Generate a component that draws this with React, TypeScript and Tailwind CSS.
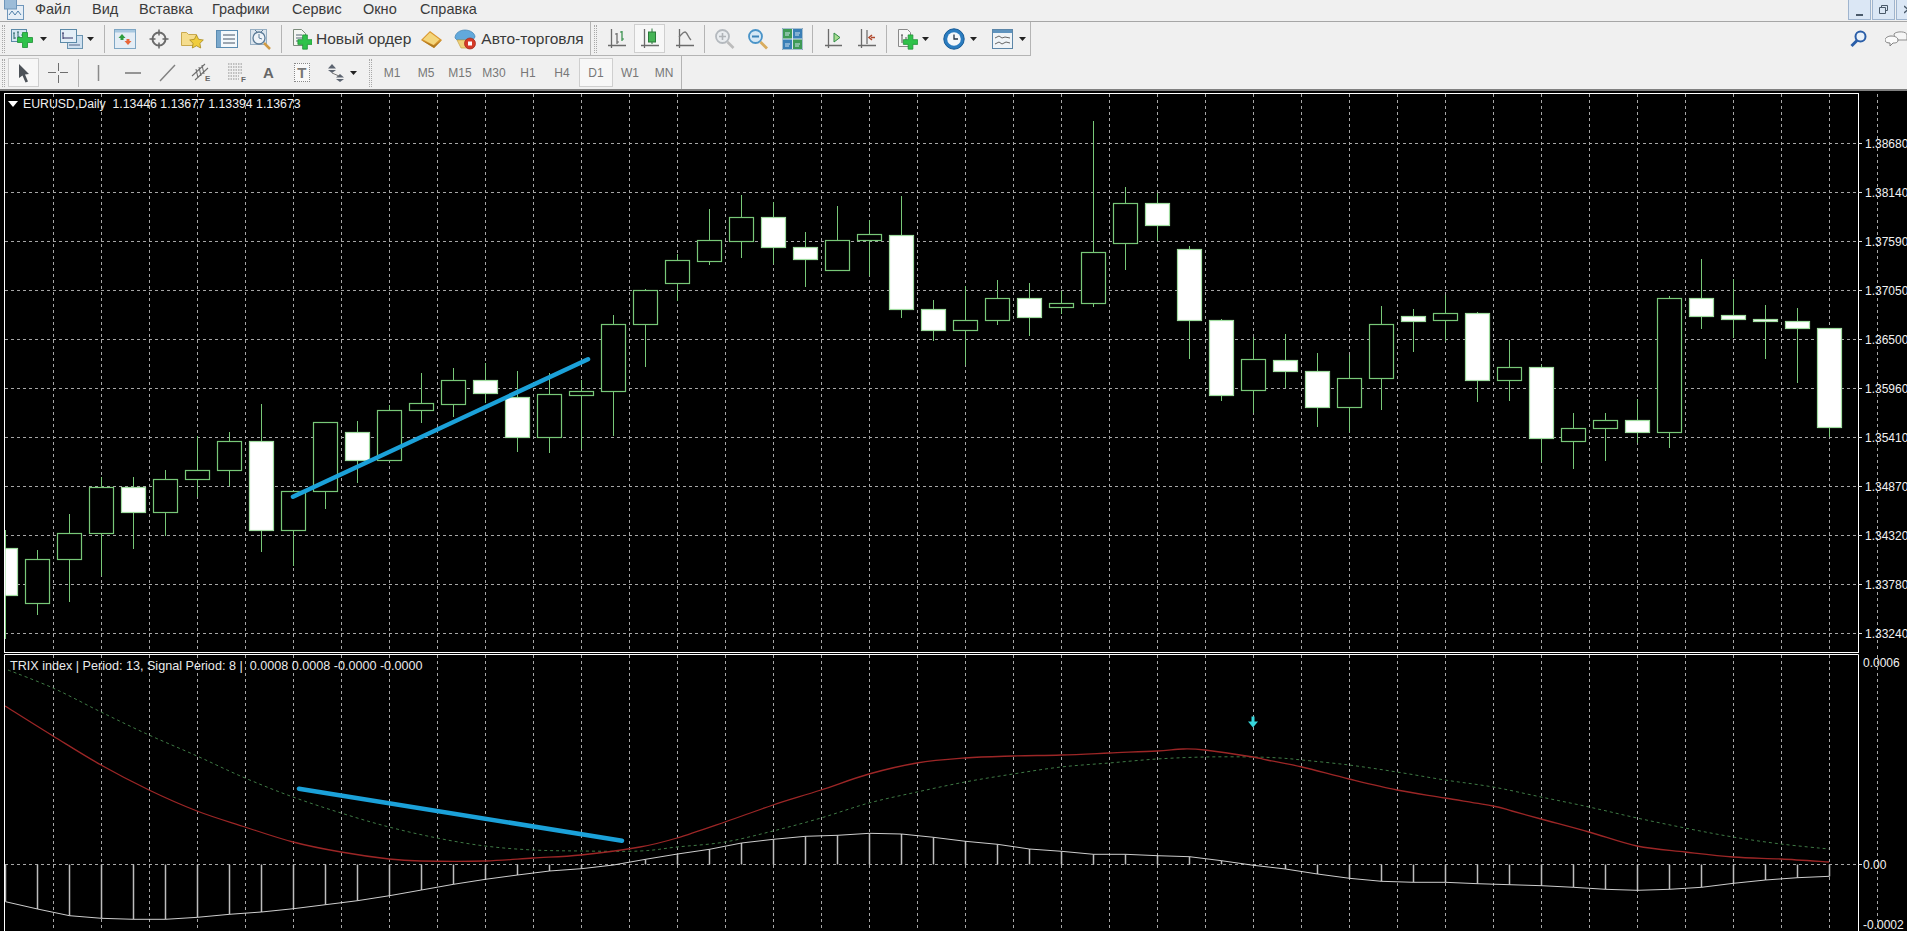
import React from "react";

type IconProps = { className?: string };
const W: React.FC<{ w: number; h?: number; className?: string; children: React.ReactNode; vb?: string }> = ({ w, h = 22, className, children, vb }) => (
  <svg width={w} height={h} viewBox={vb ?? `0 0 ${w} ${h}`} className={"shrink-0 " + (className ?? "")}>{children}</svg>
);

const GreenPlus = ({ x, y, s = 1 }: { x: number; y: number; s?: number }) => (
  <path transform={`translate(${x} ${y}) scale(${s})`} d="M-2.5 -7.5h5v5h5v5h-5v5h-5v-5h-5v-5h5z" fill="#2fc24a" stroke="#1d8f34" strokeWidth="0.8" />
);
const Axes = ({ c = "#6b6b6b" }: { c?: string }) => (
  <g stroke={c} strokeWidth="1.3" fill="none">
    <path d="M0 17.5h18M3.5 1v19" />
  </g>
);

const IconNewChart = ({ className }: IconProps) => (
  <W w={22} className={className}>
    <rect x="0.5" y="1.5" width="15" height="12" fill="#d6e6f3" stroke="#5c8aa8" />
    <path d="M3 5v6M2 5h2M3 10h2M7 4v6M6 4h2M7 9h2" stroke="#2f6a6a" fill="none" strokeWidth="1" />
    <path d="M10 7l4 0" stroke="#3a7" />
    <GreenPlus x={14} y={12} s={1} />
  </W>
);
const IconProfiles = ({ className }: IconProps) => (
  <W w={23} className={className}>
    <rect x="7.5" y="7.5" width="15" height="13" fill="#cfe0ef" stroke="#6a93b0" />
    <rect x="0.5" y="1.5" width="16" height="13" fill="#e3eef7" stroke="#5c8aa8" />
    <path d="M3 5v6M2 5h2M3 10h10" stroke="#336" fill="none" />
    <path d="M9 17h11" stroke="#568" fill="none" />
  </W>
);
const IconMarket = ({ className }: IconProps) => (
  <W w={22} className={className}>
    <rect x="0.5" y="1.5" width="21" height="19" fill="#e4edf5" stroke="#7ea6c4" />
    <rect x="1" y="2" width="20" height="2.5" fill="#a8c8e0" />
    <path d="M8 6l-3.500 4h2v2h3v-2h2z" fill="#2e9e3e" />
    <path d="M14 17l3.500 -4h-2v-2h-3v2h-2z" fill="#e8663a" />
  </W>
);
const IconTarget = ({ className }: IconProps) => (
  <W w={20} className={className}>
    <circle cx="10" cy="11" r="6.500" fill="none" stroke="#6b6b6b" strokeWidth="2" />
    <path d="M10 1.500v6M10 14.500v6M0.500 11h6M13.500 11h6" stroke="#666" strokeWidth="1.500" />
  </W>
);
const IconFolderStar = ({ className }: IconProps) => (
  <W w={23} className={className}>
    <path d="M0.500 4.500v13h15v-11h-8l-2-2z" fill="#f5dd8e" stroke="#c9a94e" />
    <path d="M15.500 7l2.100 4.300 4.700 .7-3.400 3.300.8 4.700-4.200-2.200-4.200 2.200.8-4.700-3.400-3.300 4.700-.7z" fill="#f0cd3c" stroke="#a88a1e" strokeWidth="0.8" />
  </W>
);
const IconTerminal = ({ className }: IconProps) => (
  <W w={22} className={className}>
    <rect x="0.500" y="2.500" width="21" height="17" fill="#f4f8fb" stroke="#5b8bb0" />
    <rect x="1" y="3" width="4" height="16" fill="#7aa8cc" />
    <path d="M7 7h12M7 11h12M7 15h12" stroke="#456" />
  </W>
);
const IconTester = ({ className }: IconProps) => (
  <W w={22} className={className}>
    <rect x="0.500" y="1.500" width="16" height="15" fill="#dbe5ee" stroke="#96aec2" />
    <circle cx="9" cy="10" r="6" fill="#eef3f8" stroke="#5c7c98" strokeWidth="1.300" />
    <path d="M9 6v4l3 1M5 2l2 2M13 2l-2 2" stroke="#5c7c98" fill="none" />
    <path d="M14 15l6 6" stroke="#d09a44" strokeWidth="2.500" />
  </W>
);
const IconNewOrder = ({ className }: IconProps) => (
  <W w={20} className={className}>
    <path d="M1.500 1.500h8l4 4v12h-12z" fill="#f4f6f2" stroke="#7b8b7b" />
    <path d="M4 7h6M4 10h7M4 13h4" stroke="#567" />
    <GreenPlus x={13} y={14} s={0.95} />
  </W>
);
const IconGold = ({ className }: IconProps) => (
  <W w={23} className={className}>
    <path d="M1 12l9-9 12 9-8 8z" fill="#d9972f" />
    <path d="M3 11.500l7-7 9.500 7-6 5.500z" fill="#f4d67c" />
    <path d="M1 12l13 8 8-8-8 5.500z" fill="#b07a20" />
  </W>
);
const IconAuto = ({ className }: IconProps) => (
  <W w={22} className={className}>
    <path d="M1 10c0-5 5-8 10-8s10 3 10 7l-2 3H3z" fill="#62a9dc" stroke="#3d7fb0" strokeWidth="0.700" />
    <path d="M3 12h16l-3 8H7z" fill="#efd27a" stroke="#c5a246" strokeWidth="0.700" />
    <circle cx="16" cy="15.500" r="5.500" fill="#d43a28" stroke="#a02818" strokeWidth="0.700" />
    <rect x="14" y="13.500" width="4" height="4" fill="#fff" />
  </W>
);
const IconBars = ({ className }: IconProps) => (
  <W w={18} className={className}>
    <Axes />
    <path d="M9 5v11M9 6H7M9 14h2" stroke="#666" fill="none" strokeWidth="1.200" />
    <path d="M14 3v10M14 4h-2M14 11h2" stroke="#2e8b44" fill="none" strokeWidth="1.200" />
  </W>
);
const IconCandles = ({ className }: IconProps) => (
  <W w={18} className={className}>
    <Axes />
    <rect x="7.500" y="4" width="7" height="10" fill="#46b456" stroke="#2a7a3a" />
    <path d="M11 0.500v3.500M11 14v2" stroke="#2a7a3a" />
  </W>
);
const IconLineChart = ({ className }: IconProps) => (
  <W w={18} className={className}>
    <Axes />
    <path d="M3 9c3-3 4-5 6-5 2 0 3 5 6 8" fill="none" stroke="#777" strokeWidth="1.300" />
  </W>
);
const IconZoomIn = ({ className }: IconProps) => (
  <W w={21} className={className}>
    <circle cx="8.500" cy="8.500" r="6.500" fill="#e9ecef" stroke="#b4b9be" strokeWidth="1.800" />
    <path d="M5 8.500h7M8.500 5v7" stroke="#b0b4b8" strokeWidth="1.600" />
    <path d="M13.500 14l6 6" stroke="#bcbcbc" strokeWidth="2.600" />
  </W>
);
const IconZoomOut = ({ className }: IconProps) => (
  <W w={22} className={className}>
    <circle cx="8.500" cy="8.500" r="6.500" fill="#d6e8f5" stroke="#4a94c8" strokeWidth="1.800" />
    <path d="M5 8.500h7" stroke="#3d84b8" strokeWidth="2" />
    <path d="M13.500 14l6.500 6.500" stroke="#d8ac5e" strokeWidth="2.800" />
  </W>
);
const IconTile = ({ className }: IconProps) => (
  <W w={21} className={className}>
    <rect x="0" y="0" width="21" height="22" fill="#dfe9f2" stroke="#6f94ae" />
    <rect x="1" y="1" width="9" height="9.500" fill="#3e9a56" /><rect x="11" y="1" width="9" height="9.500" fill="#3a7fb6" />
    <rect x="1" y="11.500" width="9" height="9.500" fill="#3a7fb6" /><rect x="11" y="11.500" width="9" height="9.500" fill="#3e9a56" />
    <path d="M3 5h5M3 7h4M13 5h5M13 7h4M3 16h5M3 18h4M13 16h5M13 18h4" stroke="#cfe2ee" strokeWidth="1" />
  </W>
);
const IconAutoScroll = ({ className }: IconProps) => (
  <W w={17} className={className}>
    <Axes />
    <path d="M9 5l6 4.500-6 4.500z" fill="#a8dc90" stroke="#2e8b44" />
  </W>
);
const IconShift = ({ className }: IconProps) => (
  <W w={19} className={className}>
    <Axes />
    <path d="M9 2v14" stroke="#666" strokeWidth="1.200" />
    <path d="M17 9.500h-4M14 7l-3 2.500 3 2.500" fill="none" stroke="#b0492e" strokeWidth="1.500" />
  </W>
);
const IconIndicators = ({ className }: IconProps) => (
  <W w={21} className={className}>
    <path d="M1.500 1.500h9l3 3v14h-12z" fill="#f6f6f6" stroke="#8a8a8a" />
    <path d="M5 7v8M4 7h2M9 9v6" stroke="#555" />
    <GreenPlus x={13.500} y={14} s={0.95} />
  </W>
);
const IconClock = ({ className }: IconProps) => (
  <W w={22} className={className}>
    <circle cx="11" cy="11" r="10.200" fill="#2a7cc0" stroke="#155a96" />
    <circle cx="11" cy="11" r="6.800" fill="#f4f7fa" />
    <path d="M11 6.500v4.500h4" fill="none" stroke="#234" strokeWidth="1.300" />
  </W>
);
const IconTemplates = ({ className }: IconProps) => (
  <W w={21} className={className}>
    <rect x="0.500" y="1.500" width="20" height="19" fill="#f0f4f7" stroke="#5c86a8" />
    <rect x="1" y="2" width="19" height="3" fill="#5e93be" />
    <path d="M3 10l4-2 3 2 3-1 5 1M3 16l4-2 3 2 4-2 4 1" fill="none" stroke="#666" />
  </W>
);
const IconCursor = ({ className }: IconProps) => (
  <W w={12} h={20} className={className}>
    <path d="M1 1l10 10-4 .5 3 7-2.500 1-3-7L1 15z" fill="#4d5258" />
  </W>
);
const IconCross = ({ className }: IconProps) => (
  <W w={20} className={className}>
    <path d="M0 10.500h8M12 10.500h8M10.500 1v8M10.500 13v8" stroke="#6e6e6e" />
  </W>
);
const IconVLine = ({ className }: IconProps) => (
  <W w={3} className={className}><path d="M1.500 3v16" stroke="#8a8a8a" strokeWidth="1.500" /></W>
);
const IconHLine = ({ className }: IconProps) => (
  <W w={16} className={className}><path d="M0 11h16" stroke="#777" strokeWidth="1.500" /></W>
);
const IconTrend = ({ className }: IconProps) => (
  <W w={17} className={className}><path d="M1 19L16 3" stroke="#808080" strokeWidth="1.400" /></W>
);
const IconChannels = ({ className }: IconProps) => (
  <W w={21} h={24} className={className}>
    <path d="M1 15L14 3M4 19L17 7M5 8l2 9M8 6l2 9M11 4l2 9" stroke="#6e6e6e" strokeWidth="1.100" />
    <text x="14" y="20" fontSize="8" fontWeight="700" fontFamily="Liberation Sans, sans-serif" fill="#666">E</text>
  </W>
);
const IconFibo = ({ className }: IconProps) => (
  <W w={19} h={24} className={className}>
    <path d="M0 3h14M0 6h14M0 9h14M0 12h14M0 15h11M0 18h11" stroke="#8e8e8e" strokeDasharray="1.500 1" />
    <text x="13" y="21" fontSize="8" fontWeight="700" fontFamily="Liberation Sans, sans-serif" fill="#666">F</text>
  </W>
);
const IconSwap = ({ className }: IconProps) => (
  <W w={18} className={className}>
    <path d="M5 2l4 4.500H1z" fill="#5c6470" /><path d="M1 8l4 3 4-3z" fill="#5c6470" />
    <path d="M13 12l4 3.500h-8z" fill="#5c6470" /><path d="M9 17l4 3 4-3z" fill="#5c6470" />
    <path d="M5 11l7 3" stroke="#777" />
  </W>
);
const Drop = ({ className }: IconProps) => (
  <W w={7} h={4} className={className}><path d="M0 0h7L3.500 4z" fill="#222" /></W>
);
const Grip = ({ className }: IconProps) => (
  <div className={"w-[3px] h-[28px] shrink-0 border-x border-dotted border-[#a8a8a8] " + (className ?? "")} />
);
const Sep = ({ className }: IconProps) => <div className={"w-px h-[28px] shrink-0 bg-[#b4b4b4] " + (className ?? "")} />;

const menu = [
  ["Файл", "w-[57px]"],
  ["Вид", "w-[47px]"],
  ["Вставка", "w-[73px]"],
  ["Графики", "w-[80px]"],
  ["Сервис", "w-[71px]"],
  ["Окно", "w-[57px]"],
  ["Справка", "w-[70px]"],
];
const frames = ["M1", "M5", "M15", "M30", "H1", "H4", "D1", "W1", "MN"];

// wickTop, bodyTop, bodyBottom, wickBottom, white
const candles: [number, number, number, number, number][] = [
  [530, 548, 595, 639, 1], [550, 559, 603, 615, 0], [514, 533, 559, 602, 0], [477, 487, 533, 576, 0], [477, 487, 512, 549, 1],
  [470, 479, 512, 536, 0], [436, 470, 479, 497, 0], [432, 441, 470, 486, 0], [404, 441, 530, 552, 1], [491, 491, 530, 566, 0],
  [422, 422, 491, 509, 0], [421, 432, 460, 483, 1], [405, 410, 460, 460, 0], [373, 403, 410, 423, 0], [368, 380, 404, 417, 0],
  [363, 380, 393, 403, 1], [371, 397, 437, 452, 1], [373, 394, 437, 453, 0], [380, 391, 395, 449, 0], [315, 324, 391, 436, 0],
  [289, 290, 324, 367, 0], [254, 260, 283, 301, 0], [209, 240, 261, 265, 0], [195, 217, 241, 258, 0], [202, 217, 247, 264, 1],
  [232, 247, 259, 287, 1], [206, 240, 270, 270, 0], [220, 234, 240, 276, 0], [196, 235, 309, 318, 1], [300, 309, 330, 341, 1],
  [286, 320, 330, 365, 0], [280, 298, 320, 325, 0], [283, 298, 317, 336, 1], [291, 303, 307, 314, 0], [121, 252, 303, 307, 0],
  [187, 203, 243, 270, 0], [193, 203, 225, 241, 1], [246, 249, 320, 359, 1], [319, 320, 395, 401, 1], [337, 359, 390, 413, 0],
  [334, 360, 371, 388, 1], [353, 371, 407, 427, 1], [355, 378, 407, 432, 0], [306, 324, 378, 410, 0], [309, 316, 321, 352, 1],
  [295, 313, 320, 341, 0], [312, 313, 380, 402, 1], [340, 367, 380, 401, 0], [365, 367, 438, 462, 1], [413, 428, 441, 469, 0],
  [413, 420, 428, 461, 0], [399, 420, 432, 443, 1], [296, 298, 432, 448, 0], [259, 298, 316, 329, 1], [279, 315, 319, 338, 1],
  [305, 319, 321, 359, 1], [308, 321, 328, 383, 1], [328, 328, 427, 437, 1],
];
const cx = (i: number) => Math.round(5.3 + 32 * i) + 0.5;

const hist = [755, 777, 797, 805, 808, 808, 802, 793, 786, 776, 764, 752, 737, 720, 703, 688, 675, 663, 656, 645, 628, 612, 598, 579, 568, 559, 556, 550, 552, 562, 574, 583, 597, 604, 613, 613, 617, 620, 632, 646, 657, 672, 685, 694, 697, 697, 701, 704, 707, 712, 718, 721, 718, 712, 700, 690, 683, 679].map((z) => 650 + z / 3);

const red = "5,706 53,736 101,765 149,790 197,811 245,827 293,842 341,852 389,859 420,861 485,861 533,858 581,855 640,847 677,838 725,822 773,805 821,790 869,774 917,763 965,758 1013,756 1061,755 1109,753 1157,751 1183,749 1205,750 1253,757 1267,760 1302,767 1349,779 1397,790 1445,798 1493,806 1512,811 1541,819 1589,832 1637,846 1685,852 1733,857 1781,859 1829,862";
const green = "8,670 53,688 101,712 149,735 197,756 245,778 293,797 341,813 389,827 437,838 485,846 533,850 581,851 640,851 677,847 725,842 773,831 821,818 869,803 917,792 965,782 1013,774 1061,767 1109,763 1157,759 1205,757 1253,757 1280,758 1302,760 1349,765 1397,772 1445,780 1493,787 1541,797 1589,807 1637,818 1685,828 1733,837 1781,844 1829,849";

// Catmull-Rom smoothing so that the indicator curves are not visibly kinked
const smooth = (s: string) => {
  const p = s.split(" ").map((q) => q.split(",").map(Number));
  let d = `M${p[0][0]} ${p[0][1]}`;
  for (let i = 0; i < p.length - 1; i++) {
    const a = p[Math.max(0, i - 1)], b = p[i], c = p[i + 1], e = p[Math.min(p.length - 1, i + 2)];
    d += `C${(b[0] + (c[0] - a[0]) / 6).toFixed(1)} ${(b[1] + (c[1] - a[1]) / 6).toFixed(1)} ${(c[0] - (e[0] - b[0]) / 6).toFixed(1)} ${(c[1] - (e[1] - b[1]) / 6).toFixed(1)} ${c[0]} ${c[1]}`;
  }
  return d;
};

const vLines = Array.from({ length: 39 }, (_, k) => 53.5 + 48 * k);
const prices = ["1.38680", "1.38140", "1.37590", "1.37050", "1.36500", "1.35960", "1.35410", "1.34870", "1.34320", "1.33780", "1.33240"];
const GRID = "#a6a6a6";
const DASH = "3 3";
const LABEL = { fontFamily: "Liberation Sans, sans-serif", fontSize: 12, fill: "#f2f2f2" };

function MainPanel() {
  return (
    <div className="relative h-[562px]">
      <svg width="1907" height="562" viewBox="0 91 1907 562" className="block">
        <g stroke={GRID} strokeDasharray={DASH}>
          {vLines.map((x) => <line key={x} x1={x} x2={x} y1={94} y2={652} />)}
          {prices.map((_, k) => <line key={k} x1={5} x2={1858} y1={143.5 + 49 * k} y2={143.5 + 49 * k} />)}
        </g>
        {candles.map(([wt, bt, bb, wb, white], i) => {
          const c = cx(i);
          const left = Math.max(5, c - 12);
          return (
            <g key={i}>
              <line x1={c} x2={c} y1={wt} y2={wb} stroke="#78c878" />
              <rect x={left} y={bt + 0.5} width={c + 12 - left} height={bb - bt} fill={white ? "#ffffff" : "#000000"} stroke={white ? "#a0dca0" : "#78c878"} strokeWidth="1.200" />
            </g>
          );
        })}
        <line x1="293" y1="496.700" x2="588" y2="359.300" stroke="#1ba1d9" strokeWidth="4.500" strokeLinecap="round" />
        <rect x="4.500" y="93.500" width="1854" height="559" fill="none" stroke="#ffffff" />
        {prices.map((p, k) => (
          <g key={p}>
            <line x1="1858" x2="1862" y1={143.5 + 49 * k} y2={143.5 + 49 * k} stroke="#e0e0e0" />
            <text x="1865" y={148 + 49 * k} {...LABEL}>{p}</text>
          </g>
        ))}
      </svg>
      <div className="absolute left-[8px] top-[6px] flex items-center gap-[5px] text-[12.300px] leading-[14px] text-[#f0f0f0] font-['Liberation_Sans',sans-serif] whitespace-pre">
        <svg width="10" height="6" viewBox="0 0 10 6"><path d="M0 0h10L5 6z" fill="#fff" /></svg>
        <span>EURUSD,Daily  1.13446 1.13677 1.13394 1.13673</span>
      </div>
    </div>
  );
}

function SubPanel() {
  return (
    <div className="relative h-[278px]">
      <svg width="1907" height="278" viewBox="0 653 1907 278" className="block">
        <g stroke={GRID} strokeDasharray={DASH}>
          {vLines.map((x) => <line key={x} x1={x} x2={x} y1={655} y2={931} />)}
          <line x1={5} x2={1858} y1={864.5} y2={864.5} />
        </g>
        <path d={smooth(green)} fill="none" stroke="#3f7a45" strokeWidth="1" strokeDasharray="3 3" />
        <path d={smooth(red)} fill="none" stroke="#9c2626" strokeWidth="1.300" />
        {hist.map((y, i) => <line key={i} x1={cx(i)} x2={cx(i)} y1={864.5} y2={y} stroke="#bdbdbd" strokeWidth="1.500" />)}
        <polyline points={hist.map((y, i) => `${cx(i)},${y.toFixed(1)}`).join(" ")} fill="none" stroke="#e4e4e4" strokeWidth="0.900" />
        <line x1="299" y1="788.700" x2="622" y2="840.700" stroke="#1ba1d9" strokeWidth="4.500" strokeLinecap="round" />
        <path d="M1251.500 716.500h3v5h3.500l-5 6-5-6h3.500z" fill="#37d6dc" />
        <path d="M4.500 931V654.500H1858.500V931" fill="none" stroke="#ffffff" />
        <line x1="1858" x2="1862" y1="864.500" y2="864.500" stroke="#e0e0e0" />
        <text x="1863" y="667" {...LABEL}>0.0006</text>
        <text x="1863" y="869" {...LABEL}>0.00</text>
        <text x="1863" y="929" {...LABEL}>-0.0002</text>
      </svg>
      <div className="absolute left-[10px] top-[6px] text-[12.600px] leading-[14px] text-[#eaeaea] font-['Liberation_Sans',sans-serif] whitespace-pre">
        TRIX index | Period: 13, Signal Period: 8 |  0.0008 0.0008 -0.0000 -0.0000
      </div>
    </div>
  );
}

export default function App() {
  return (
    <div className="w-[1907px] h-[931px] overflow-hidden bg-[#f0f0f0] flex flex-col font-['Liberation_Sans',sans-serif] text-[#333]">
      {/* menu */}
      <div className="h-[22px] shrink-0 flex items-start border-b border-[#a6a6a6]">
        <svg width="20" height="20" viewBox="0 0 20 20" className="ml-[4px] shrink-0">
          <rect x="3.500" y="5.500" width="16" height="14" fill="#e6eef6" stroke="#6f96ba" />
          <rect x="0.500" y="-2" width="12" height="11" fill="#9cbcd8" stroke="#6f96ba" />
          <path d="M5 15l3-4 3 4 3-4 3 4" fill="none" stroke="#4d7ea8" />
        </svg>
        <div className="flex ml-[11px] text-[14.500px] leading-[19px] text-[#3a3a3a]">
          {menu.map(([t, w]) => <div key={t} className={w}>{t}</div>)}
        </div>
        <div className="ml-auto flex gap-px">
          <div className="w-[23px] h-[20px] bg-[#dbe7f5] border border-t-0 border-[#9fb4ce] flex items-end justify-center pb-[3px]"><div className="w-[7px] h-[2px] bg-[#4a5a6a]" /></div>
          <div className="w-[23px] h-[20px] bg-[#dbe7f5] border border-t-0 border-[#9fb4ce] flex items-center justify-center">
            <svg width="9" height="9" viewBox="0 0 9 9"><path d="M2.500 2.500v-2h6v5h-2M.5 2.500h6v6h-6z" fill="none" stroke="#4a5a6a" /></svg>
          </div>
          <div className="w-[11px] h-[20px] bg-[#dbe7f5] border-l border-b border-[#9fb4ce] flex items-center overflow-hidden pl-[7px]">
            <svg width="4" height="9" viewBox="0 0 4 9" className="shrink-0"><path d="M0 1l4 3.500M0 8l4-3.500" stroke="#4a5a6a" strokeWidth="1.500" /></svg>
          </div>
        </div>
      </div>

      {/* toolbar row 1 */}
      <div className="h-[34px] shrink-0 flex">
        <div className="w-[591px] h-[34px] flex items-center border-r border-b border-[#b4b4b4] pl-[2px]">
          <Grip />
          <IconNewChart className="ml-[6px]" />
          <Drop className="ml-[7px]" />
          <IconProfiles className="ml-[13px]" />
          <Drop className="ml-[4px]" />
          <Sep className="ml-[10px]" />
          <IconMarket className="ml-[9px]" />
          <IconTarget className="ml-[13px]" />
          <IconFolderStar className="ml-[12px]" />
          <IconTerminal className="ml-[12px]" />
          <IconTester className="ml-[12px]" />
          <Sep className="ml-[9px]" />
          <IconNewOrder className="ml-[10px]" />
          <span className="ml-[4px] text-[15.500px] leading-[20px] whitespace-nowrap text-[#3a3a3a]">Новый ордер</span>
          <IconGold className="ml-[9px]" />
          <IconAuto className="ml-[11px]" />
          <span className="ml-[5px] text-[15.500px] leading-[20px] whitespace-nowrap text-[#3a3a3a]">Авто-торговля</span>
        </div>
        <div className="w-[440px] h-[34px] flex items-center border-r border-b border-[#b4b4b4] pl-[3px]">
          <Grip />
          <IconBars className="ml-[11px]" />
          <div className="ml-[8px] w-[31px] h-[29px] flex items-center justify-center bg-[#f7f7f7] border border-[#cfcfcf] shrink-0"><IconCandles /></div>
          <IconLineChart className="ml-[11px]" />
          <Sep className="ml-[10px]" />
          <IconZoomIn className="ml-[9px]" />
          <IconZoomOut className="ml-[12px]" />
          <IconTile className="ml-[13px]" />
          <Sep className="ml-[9px]" />
          <IconAutoScroll className="ml-[12px]" />
          <IconShift className="ml-[16px]" />
          <Sep className="ml-[9px]" />
          <IconIndicators className="ml-[10px]" />
          <Drop className="ml-[4px]" />
          <IconClock className="ml-[14px]" />
          <Drop className="ml-[5px]" />
          <IconTemplates className="ml-[15px]" />
          <Drop className="ml-[6px]" />
        </div>
        <div className="flex-1 flex items-center justify-end">
          <svg width="17" height="18" viewBox="0 0 17 18" className="mr-[18px]">
            <circle cx="10.500" cy="6.500" r="5" fill="#eaf2fa" stroke="#2a5ea8" strokeWidth="2" />
            <path d="M7 10.500L1.500 16" stroke="#2a5ea8" strokeWidth="3" />
          </svg>
          <svg width="22" height="18" viewBox="0 0 22 18">
            <path d="M9 4c2-3 13-3 13 1v5H10z" fill="#f6f6f6" stroke="#8e8e8e" />
            <path d="M6 6c3 0 7 1 7 4s-3 3-5 3l-3 3v-3c-3 0-5-1-5-3s3-4 6-4z" fill="#fafafa" stroke="#808080" />
          </svg>
        </div>
      </div>

      {/* toolbar row 2 */}
      <div className="h-[33px] shrink-0 flex">
        <div className="w-[682px] h-[33px] flex items-center border-r border-[#b4b4b4] pl-[2px]">
          <Grip />
          <div className="ml-[3px] w-[31px] h-[29px] flex items-center justify-center bg-[#f7f7f7] border border-[#cfcfcf] shrink-0"><IconCursor /></div>
          <IconCross className="ml-[9px]" />
          <Sep className="ml-[10px]" />
          <IconVLine className="ml-[18px]" />
          <IconHLine className="ml-[25px]" />
          <IconTrend className="ml-[18px]" />
          <IconChannels className="ml-[15px]" />
          <IconFibo className="ml-[16px]" />
          <span className="ml-[16px] w-[11px] text-[15px] font-bold text-[#666] leading-[20px]">A</span>
          <div className="ml-[20px] w-[17px] h-[19px] border border-dotted border-[#888] flex items-center justify-center text-[15px] font-bold text-[#777] leading-none bg-[#f8f8f8]">T</div>
          <IconSwap className="ml-[17px]" />
          <Drop className="ml-[5px]" />
          <Grip className="ml-[12px]" />
          <div className="ml-[3px] flex items-center text-[12px] text-[#777]">
            {frames.map((f) => (
              <div key={f} className={f === "D1" ? "w-[34px] h-[29px] pt-[1px] flex items-center justify-center bg-[#f7f7f7] border border-[#cfcfcf]" : "w-[34px] h-[29px] pt-[1px] flex items-center justify-center"}>{f}</div>
            ))}
          </div>
        </div>
      </div>

      {/* chart */}
      <div className="flex-1 border-t-2 border-[#808080] bg-black overflow-hidden">
        <MainPanel />
        <SubPanel />
      </div>
    </div>
  );
}
